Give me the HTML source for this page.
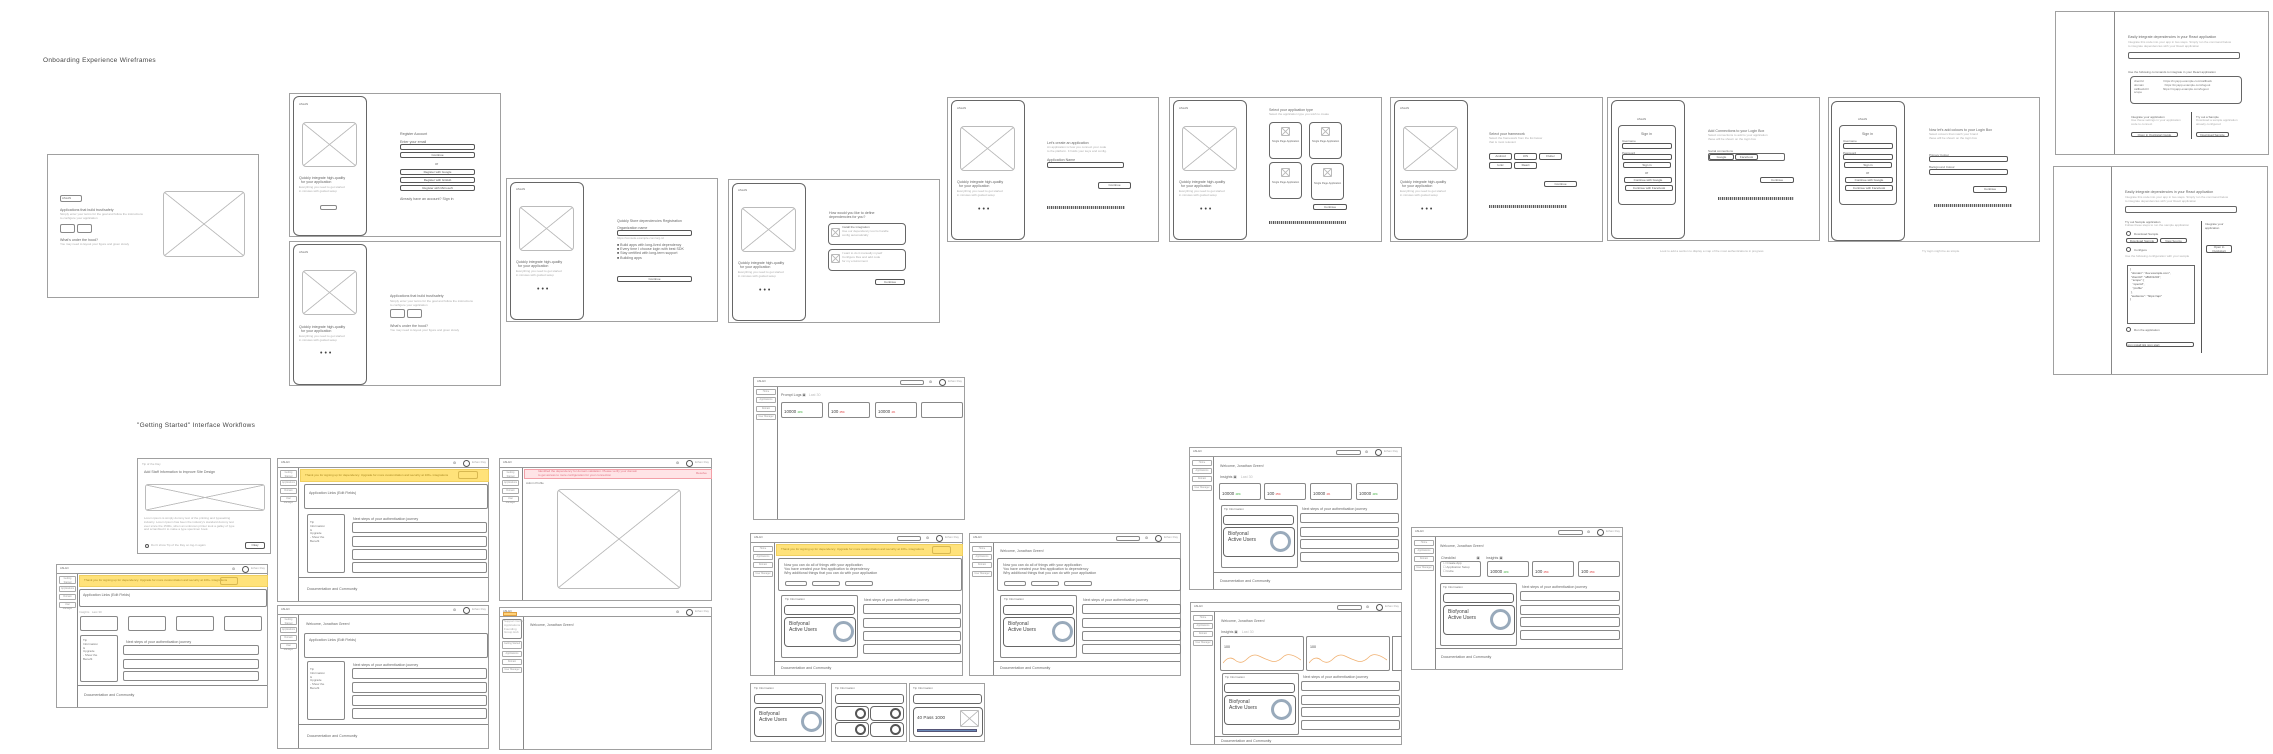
<!DOCTYPE html>
<html><head><meta charset="utf-8">
<style>
*{margin:0;padding:0;box-sizing:border-box}
body{width:2273px;height:754px;background:#fff;position:relative;overflow:hidden;font-family:"Liberation Sans",sans-serif}
.f{position:absolute;border:1px solid #a0a0a0;background:#fff}
.a{position:absolute}
.t{position:absolute;font-size:3.6px;line-height:4.2px;color:#666;white-space:nowrap}
.tg{position:absolute;font-size:3px;line-height:3.8px;color:#aaa;white-space:nowrap}
.h{position:absolute;font-size:4.4px;color:#444;white-space:nowrap}
.bx{position:absolute;border:1px solid #888;border-radius:2px;background:#fff}
.bd{position:absolute;border:1px solid #555;border-radius:2px;background:#fff;font-size:3px;color:#555;text-align:center;line-height:5px}
.card{position:absolute;border:1px solid #666;border-radius:6px;background:#fff}
.x{position:absolute;border:1px solid #bbb;border-radius:4px;background:
linear-gradient(to top right,transparent calc(50% - .6px),#bbb calc(50% - .3px),#bbb calc(50% + .3px),transparent calc(50% + .6px)),
linear-gradient(to bottom right,transparent calc(50% - .6px),#bbb calc(50% - .3px),#bbb calc(50% + .3px),transparent calc(50% + .6px))}
.dots{position:absolute;font-size:7px;color:#444;letter-spacing:2px}
.bar{position:absolute;height:3px;background:repeating-linear-gradient(90deg,#555 0 1px,#ccc 1px 2px,#777 2px 3px,#ddd 3px 4px)}
.tb{position:absolute;left:0;top:0;right:0;height:9px;border-bottom:1px solid #999}
.sb{position:absolute;left:0;top:9px;width:21px;bottom:0;border-right:1px solid #888}
.si{position:absolute;left:2px;width:17px;height:6px;border:1px solid #aaa;border-radius:1px;font-size:2.4px;color:#999;text-align:center;line-height:4px}
.yb{position:absolute;background:#ffe27a;border:1px solid #f0d060}
.circ{position:absolute;border:1px solid #555;border-radius:50%}
.title{position:absolute;font-size:6.5px;color:#444;letter-spacing:.3px;white-space:nowrap}
</style></head><body>

<div class="title" style="left:43px;top:57px">Onboarding Experience Wireframes</div>
<div class="title" style="left:137px;top:422px">"Getting Started" Interface Workflows</div>

<!-- Box1 -->
<div class="f" style="left:47px;top:154px;width:212px;height:144px">
 <div class="bx" style="left:12px;top:40px;width:22px;height:7px"></div><div class="t" style="left:14px;top:41px;font-size:2.8px">ASLAN</div>
 <div class="t" style="left:12px;top:53px">Applications that build trust/safety</div>
 <div class="tg" style="left:12px;top:58px">Simply enter your terms for the goal and follow the instructions<br>to configure your application</div>
 <div class="bx" style="left:12px;top:69px;width:15px;height:9px"></div><div class="bx" style="left:29px;top:69px;width:15px;height:9px"></div>
 <div class="t" style="left:12px;top:83px">What's under the hood?</div>
 <div class="tg" style="left:12px;top:88px">You may need to layout your figure and given slowly</div>
 <div class="x" style="left:115px;top:36px;width:82px;height:66px"></div>
</div>

<!-- phone frame generic -->
<div class="f" style="left:289px;top:93px;width:212px;height:144px">
 <div class="card" style="left:3px;top:2px;width:74px;height:140px"></div>
 <div class="t" style="left:9px;top:8px;font-size:2.8px">ASLAN</div>
 <div class="x" style="left:12px;top:28px;width:55px;height:45px"></div>
 <div class="t" style="left:9px;top:82px">Quickly integrate high-quality<br>&nbsp;&nbsp;for your application</div>
 <div class="tg" style="left:9px;top:92px">Everything you need to get started<br>in minutes with guided setup</div>
 <div class="bx" style="left:30px;top:111px;width:17px;height:5px"></div>
 <div class="t" style="left:110px;top:38px">Register Account</div>
 <div class="t" style="left:110px;top:46px">Enter your email</div>
 <div class="bd" style="left:110px;top:50px;width:75px;height:6px"></div>
 <div class="bd" style="left:110px;top:58px;width:75px;height:6px">Continue</div>
 <div class="t" style="left:145px;top:68px">or</div>
 <div class="bd" style="left:110px;top:75px;width:75px;height:6px">Register with Google</div>
 <div class="bd" style="left:110px;top:83px;width:75px;height:6px">Register with GitHub</div>
 <div class="bd" style="left:110px;top:91px;width:75px;height:6px">Register with Microsoft</div>
 <div class="t" style="left:110px;top:103px">Already have an account? Sign in</div>
</div>

<div class="f" style="left:289px;top:241px;width:212px;height:145px">
 <div class="card" style="left:3px;top:2px;width:74px;height:141px"></div>
 <div class="t" style="left:9px;top:8px;font-size:2.8px">ASLAN</div>
 <div class="x" style="left:12px;top:28px;width:55px;height:45px"></div>
 <div class="t" style="left:9px;top:83px">Quickly integrate high-quality<br>&nbsp;&nbsp;for your application</div>
 <div class="tg" style="left:9px;top:93px">Everything you need to get started<br>in minutes with guided setup</div>
 <div class="dots" style="left:30px;top:108px">•••</div>
 <div class="t" style="left:100px;top:52px">Applications that build trust/safety</div>
 <div class="tg" style="left:100px;top:58px">Simply enter your terms for the goal and follow the instructions<br>to configure your application</div>
 <div class="bx" style="left:100px;top:67px;width:15px;height:9px"></div><div class="bx" style="left:117px;top:67px;width:15px;height:9px"></div>
 <div class="t" style="left:100px;top:82px">What's under the hood?</div>
 <div class="tg" style="left:100px;top:87px">You may need to layout your figure and given slowly</div>
</div>

<div class="f" style="left:506px;top:178px;width:212px;height:144px">
 <div class="card" style="left:3px;top:3px;width:74px;height:138px"></div>
 <div class="t" style="left:9px;top:8px;font-size:2.8px">ASLAN</div>
 <div class="x" style="left:12px;top:27px;width:55px;height:45px"></div>
 <div class="t" style="left:9px;top:81px">Quickly integrate high-quality<br>&nbsp;&nbsp;for your application</div>
 <div class="tg" style="left:9px;top:91px">Everything you need to get started<br>in minutes with guided setup</div>
 <div class="dots" style="left:30px;top:107px">•••</div>
 <div class="t" style="left:110px;top:40px">Quickly Store dependencies Registration</div>
 <div class="t" style="left:110px;top:47px">Organization name</div>
 <div class="bd" style="left:110px;top:51px;width:75px;height:6px"></div>
 <div class="tg" style="left:110px;top:58px">https://console.example.com/org-id</div>
 <div class="t" style="left:110px;top:64px">■ Build apps with long-lived dependency<br>■ Every time I choose login with best SDK<br>■ Stay certified with long-term support<br>■ Building apps</div>
 <div class="bd" style="left:110px;top:97px;width:75px;height:6px">Continue</div>
</div>

<div class="f" style="left:728px;top:179px;width:212px;height:144px">
 <div class="card" style="left:3px;top:3px;width:74px;height:138px"></div>
 <div class="t" style="left:9px;top:8px;font-size:2.8px">ASLAN</div>
 <div class="x" style="left:12px;top:27px;width:55px;height:45px"></div>
 <div class="t" style="left:9px;top:81px">Quickly integrate high-quality<br>&nbsp;&nbsp;for your application</div>
 <div class="tg" style="left:9px;top:91px">Everything you need to get started<br>in minutes with guided setup</div>
 <div class="dots" style="left:30px;top:107px">•••</div>
 <div class="t" style="left:100px;top:31px">How would you like to define<br>dependencies for you?</div>
 <div class="card" style="left:99px;top:43px;width:78px;height:22px;border-radius:4px"></div>
 <div class="x" style="left:102px;top:48px;width:9px;height:9px;border-radius:1px"></div>
 <div class="t" style="left:113px;top:45px;font-size:3px">Install the integration</div>
 <div class="tg" style="left:113px;top:50px">Use our dependency tool to handle<br>config automatically</div>
 <div class="card" style="left:99px;top:69px;width:78px;height:22px;border-radius:4px"></div>
 <div class="x" style="left:102px;top:74px;width:9px;height:9px;border-radius:1px"></div>
 <div class="tg" style="left:113px;top:72px">I want to do it manually myself<br>Configure files and add code<br>for my environment</div>
 <div class="bd" style="left:146px;top:99px;width:30px;height:6px">Continue</div>
</div>

<!-- top row phone frames -->
<div class="f" style="left:947px;top:97px;width:212px;height:145px">
 <div class="card" style="left:3px;top:2px;width:74px;height:140px"></div>
 <div class="t" style="left:9px;top:8px;font-size:2.8px">ASLAN</div>
 <div class="x" style="left:12px;top:28px;width:55px;height:45px"></div>
 <div class="t" style="left:9px;top:82px">Quickly integrate high-quality<br>&nbsp;&nbsp;for your application</div>
 <div class="tg" style="left:9px;top:92px">Everything you need to get started<br>in minutes with guided setup</div>
 <div class="dots" style="left:30px;top:108px">•••</div>
 <div class="t" style="left:99px;top:43px">Let's create an application</div>
 <div class="tg" style="left:99px;top:48px">An application is how you connect your code<br>to the platform. It holds your keys and config.</div>
 <div class="t" style="left:99px;top:60px">Application Name</div>
 <div class="bd" style="left:99px;top:64px;width:77px;height:6px"></div>
 <div class="bd" style="left:150px;top:84px;width:33px;height:7px">Continue</div>
 <div class="bar" style="left:99px;top:108px;width:78px"></div>
</div>

<div class="f" style="left:1169px;top:97px;width:213px;height:145px">
 <div class="card" style="left:3px;top:2px;width:74px;height:140px"></div>
 <div class="t" style="left:9px;top:8px;font-size:2.8px">ASLAN</div>
 <div class="x" style="left:12px;top:28px;width:55px;height:45px"></div>
 <div class="t" style="left:9px;top:82px">Quickly integrate high-quality<br>&nbsp;&nbsp;for your application</div>
 <div class="tg" style="left:9px;top:92px">Everything you need to get started<br>in minutes with guided setup</div>
 <div class="dots" style="left:30px;top:108px">•••</div>
 <div class="t" style="left:99px;top:10px">Select your application type</div>
 <div class="tg" style="left:99px;top:15px">Select the application type you wish to create</div>
 <div class="card" style="left:99px;top:24px;width:33px;height:37px;border-radius:4px"></div>
 <div class="card" style="left:139px;top:24px;width:33px;height:37px;border-radius:4px"></div>
 <div class="card" style="left:99px;top:64px;width:33px;height:37px;border-radius:4px"></div>
 <div class="card" style="left:141px;top:65px;width:33px;height:37px;border-radius:4px"></div>
 <div class="x" style="left:111px;top:29px;width:9px;height:9px;border-radius:1px"></div>
 <div class="x" style="left:151px;top:29px;width:9px;height:9px;border-radius:1px"></div>
 <div class="x" style="left:111px;top:70px;width:9px;height:9px;border-radius:1px"></div>
 <div class="x" style="left:153px;top:70px;width:9px;height:9px;border-radius:1px"></div>
 <div class="t" style="left:102px;top:42px;font-size:2.6px">Single Page Application</div>
 <div class="t" style="left:142px;top:42px;font-size:2.6px">Single Page Application</div>
 <div class="t" style="left:102px;top:83px;font-size:2.6px">Single Page Application</div>
 <div class="t" style="left:144px;top:84px;font-size:2.6px">Single Page Application</div>
 <div class="bd" style="left:143px;top:106px;width:34px;height:6px">Continue</div>
 <div class="bar" style="left:99px;top:123px;width:77px"></div>
</div>

<div class="f" style="left:1390px;top:97px;width:213px;height:145px">
 <div class="card" style="left:3px;top:2px;width:74px;height:140px"></div>
 <div class="t" style="left:9px;top:8px;font-size:2.8px">ASLAN</div>
 <div class="x" style="left:12px;top:28px;width:55px;height:45px"></div>
 <div class="t" style="left:9px;top:82px">Quickly integrate high-quality<br>&nbsp;&nbsp;for your application</div>
 <div class="tg" style="left:9px;top:92px">Everything you need to get started<br>in minutes with guided setup</div>
 <div class="dots" style="left:30px;top:108px">•••</div>
 <div class="t" style="left:98px;top:34px">Select your framework</div>
 <div class="tg" style="left:98px;top:39px">Select the framework from the list below<br>that is most relevant</div>
 <div class="bd" style="left:98px;top:55px;width:23px;height:7px">Android</div>
 <div class="bd" style="left:123px;top:55px;width:23px;height:7px">iOS</div>
 <div class="bd" style="left:148px;top:55px;width:23px;height:7px">Flutter</div>
 <div class="bd" style="left:98px;top:64px;width:23px;height:7px">Ionic</div>
 <div class="bd" style="left:123px;top:64px;width:23px;height:7px">React</div>
 <div class="bd" style="left:153px;top:83px;width:33px;height:6px">Continue</div>
 <div class="bar" style="left:98px;top:107px;width:78px"></div>
</div>

<div class="f" style="left:1607px;top:97px;width:213px;height:144px">
 <div class="card" style="left:3px;top:2px;width:74px;height:139px"></div>
 <div class="t" style="left:29px;top:19px;font-size:2.8px">ASLAN</div>
 <div class="card" style="left:10px;top:27px;width:58px;height:80px;border-radius:4px"></div>
 <div class="t" style="left:33px;top:34px">Sign in</div>
 <div class="t" style="left:14px;top:41px;font-size:3px">Username</div>
 <div class="bd" style="left:14px;top:45px;width:50px;height:6px"></div>
 <div class="t" style="left:14px;top:53px;font-size:3px">Password</div>
 <div class="bd" style="left:14px;top:56px;width:50px;height:6px"></div>
 <div class="bd" style="left:15px;top:64px;width:48px;height:6px">Sign in</div>
 <div class="t" style="left:37px;top:73px">or</div>
 <div class="bd" style="left:16px;top:79px;width:48px;height:6px">Continue with Google</div>
 <div class="bd" style="left:17px;top:87px;width:48px;height:6px">Continue with Facebook</div>
 <div class="t" style="left:100px;top:31px">Add Connections to your Login Box</div>
 <div class="tg" style="left:100px;top:36px">Select connections to add to your application<br>these will be shown on the login box</div>
 <div class="t" style="left:100px;top:51px;font-size:3px">Social connections</div>
 <div class="card" style="left:100px;top:55px;width:77px;height:8px;border-radius:2px"></div>
 <div class="bd" style="left:101px;top:56px;width:25px;height:6px">Google</div>
 <div class="bd" style="left:127px;top:56px;width:23px;height:6px">Facebook</div>
 <div class="bd" style="left:152px;top:79px;width:34px;height:6px">Continue</div>
 <div class="bar" style="left:110px;top:99px;width:76px"></div>
</div>

<div class="f" style="left:1828px;top:97px;width:212px;height:145px">
 <div class="card" style="left:2px;top:3px;width:74px;height:140px"></div>
 <div class="t" style="left:29px;top:19px;font-size:2.8px">ASLAN</div>
 <div class="card" style="left:10px;top:27px;width:58px;height:80px;border-radius:4px"></div>
 <div class="t" style="left:33px;top:34px">Sign in</div>
 <div class="t" style="left:14px;top:41px;font-size:3px">Username</div>
 <div class="bd" style="left:14px;top:45px;width:50px;height:6px"></div>
 <div class="t" style="left:14px;top:53px;font-size:3px">Password</div>
 <div class="bd" style="left:14px;top:56px;width:50px;height:6px"></div>
 <div class="bd" style="left:15px;top:64px;width:48px;height:6px">Sign in</div>
 <div class="t" style="left:37px;top:73px">or</div>
 <div class="bd" style="left:16px;top:79px;width:48px;height:6px">Continue with Google</div>
 <div class="bd" style="left:16px;top:87px;width:48px;height:6px">Continue with Facebook</div>
 <div class="t" style="left:100px;top:30px">Now let's add colours to your Login Box</div>
 <div class="tg" style="left:100px;top:35px">Select colours that match your brand<br>these will be shown on the login box</div>
 <div class="t" style="left:100px;top:55px;font-size:3px">Primary Colour</div>
 <div class="bd" style="left:100px;top:58px;width:79px;height:6px"></div>
 <div class="t" style="left:100px;top:67px;font-size:3px">Background Colour</div>
 <div class="bd" style="left:100px;top:71px;width:79px;height:6px"></div>
 <div class="bd" style="left:144px;top:88px;width:34px;height:7px">Continue</div>
 <div class="bar" style="left:105px;top:106px;width:78px"></div>
</div>
<div class="tg" style="left:1660px;top:250px">Look to add a section to display a map of the most authentications in progress</div>
<div class="tg" style="left:1922px;top:250px">Try login might be as simple</div>

<!-- right top boxes -->
<div class="f" style="left:2055px;top:11px;width:214px;height:144px">
 <div class="a" style="left:58px;top:0;bottom:0;border-left:1px solid #888"></div>
 <div class="t" style="left:72px;top:23px">Easily integrate dependencies in your React application</div>
 <div class="tg" style="left:72px;top:29px">Integrate this code into your app in two steps. Simply run the command below<br>to integrate dependencies with your React application</div>
 <div class="card" style="left:72px;top:40px;width:112px;height:7px;border-radius:2px"></div>
 <div class="t" style="left:72px;top:58px;font-size:3px">Use the following commands to integrate in your React application</div>
 <div class="card" style="left:74px;top:64px;width:112px;height:28px;border-radius:4px"></div>
 <div class="tg" style="left:78px;top:68px;color:#777">clientId&nbsp;&nbsp;&nbsp;&nbsp;&nbsp;&nbsp;&nbsp;&nbsp;&nbsp;&nbsp;&nbsp;&nbsp;&nbsp;&nbsp;&nbsp;&nbsp;&nbsp;&nbsp;&nbsp;&nbsp;&nbsp;&nbsp;&nbsp;&nbsp;https://myapp.example.com/callback<br>domain&nbsp;&nbsp;&nbsp;&nbsp;&nbsp;&nbsp;&nbsp;&nbsp;&nbsp;&nbsp;&nbsp;&nbsp;&nbsp;&nbsp;&nbsp;&nbsp;&nbsp;&nbsp;&nbsp;&nbsp;&nbsp;&nbsp;&nbsp;&nbsp;&nbsp;https://myapp.example.com/logout<br>callbackUrl&nbsp;&nbsp;&nbsp;&nbsp;&nbsp;&nbsp;&nbsp;&nbsp;&nbsp;&nbsp;&nbsp;&nbsp;&nbsp;&nbsp;&nbsp;&nbsp;&nbsp;https://myapp.example.com/logout<br>scope</div>
 <div class="a" style="left:135px;top:100px;height:27px;border-left:1px solid #555"></div>
 <div class="t" style="left:75px;top:103px;font-size:3px">Integrate your application</div>
 <div class="tg" style="left:75px;top:107px">Use these settings in your application<br>code to connect</div>
 <div class="bd" style="left:75px;top:120px;width:47px;height:5px">Open in Quickstart Guide</div>
 <div class="t" style="left:140px;top:103px;font-size:3px">Try out a Sample</div>
 <div class="tg" style="left:140px;top:107px">Download a sample application<br>already configured</div>
 <div class="bd" style="left:140px;top:120px;width:33px;height:5px">Download Sample</div>
</div>

<div class="f" style="left:2053px;top:166px;width:215px;height:209px">
 <div class="a" style="left:57px;top:0;bottom:0;border-left:1px solid #888"></div>
 <div class="t" style="left:71px;top:23px">Easily integrate dependencies in your React application</div>
 <div class="tg" style="left:71px;top:29px">Integrate this code into your app in two steps. Simply run the command below<br>to integrate dependencies with your React application</div>
 <div class="card" style="left:71px;top:39px;width:112px;height:7px;border-radius:2px"></div>
 <div class="t" style="left:71px;top:53px;font-size:3px">Try out Sample application</div>
 <div class="tg" style="left:71px;top:57px">Follow these steps to run the sample application</div>
 <div class="circ" style="left:72px;top:64px;width:5px;height:5px"></div><div class="t" style="left:80px;top:65px;font-size:3px">Download Sample</div>
 <div class="bd" style="left:72px;top:71px;width:32px;height:5px">Download Sample</div>
 <div class="bd" style="left:106px;top:71px;width:27px;height:5px">View Source</div>
 <div class="circ" style="left:72px;top:80px;width:5px;height:5px"></div><div class="t" style="left:80px;top:81px;font-size:3px">Configure</div>
 <div class="tg" style="left:71px;top:88px">Use the following configuration with your sample</div>
 <div class="a" style="left:73px;top:98px;width:68px;height:59px;border:1px solid #666"></div>
 <div class="tg" style="left:76px;top:101px;color:#555">{<br>&nbsp;"domain": "dev.example.com",<br>&nbsp;"clientId": "aBcD1234",<br>&nbsp;&nbsp;"scope": [<br>&nbsp;&nbsp;&nbsp;"openid",<br>&nbsp;&nbsp;&nbsp;"profile"<br>&nbsp;],<br>&nbsp;"audience": "https://api"<br>}</div>
 <div class="circ" style="left:72px;top:160px;width:5px;height:5px"></div><div class="t" style="left:80px;top:161px;font-size:3px">Run the application</div>
 <div class="bd" style="left:72px;top:175px;width:68px;height:5px;text-align:left">npm install &amp;&amp; npm start</div>
 <div class="a" style="left:147px;top:54px;height:132px;border-left:1px solid #555"></div>
 <div class="t" style="left:151px;top:55px;font-size:3px">Integrate your<br>application</div>
 <div class="bd" style="left:152px;top:78px;width:26px;height:8px;line-height:3.5px">Open in Quickstart</div>
</div>

<!-- Getting started section -->
<div class="f" style="left:137px;top:458px;width:134px;height:96px">
 <div class="tg" style="left:4px;top:4px">Tip of the Day</div>
 <div class="t" style="left:6px;top:11px">Add Staff Information to Improve Site Design</div>
 <div class="x" style="left:7px;top:25px;width:120px;height:27px;border-radius:3px"></div>
 <div class="tg" style="left:6px;top:58px">Lorem ipsum is simply dummy text of the printing and typesetting<br>industry. Lorem Ipsum has been the industry's standard dummy text<br>ever since the 1500s, when an unknown printer took a galley of type<br>and scrambled it to make a type specimen book.</div>
 <div class="circ" style="left:7px;top:85px;width:4px;height:4px"></div><div class="tg" style="left:13px;top:85px">Don't show Tip of the Day on log-in again</div>
 <div class="bd" style="left:107px;top:83px;width:20px;height:7px">Okay</div>
</div>

<!-- Dashboard L -->
<div class="f" style="left:56px;top:564px;width:212px;height:144px">
 <div class="tb"></div><div class="t" style="left:3px;top:2px;font-size:2.6px">ASLAN</div>
 <div class="t" style="left:175px;top:2px">⚙</div><div class="circ" style="left:185px;top:1px;width:7px;height:7px"></div><div class="tg" style="left:194px;top:2px">Ethan Ray</div>
 <div class="sb"></div>
 <div class="si" style="top:11px;height:8px">Getting Started</div><div class="si" style="top:21px">Applications</div><div class="si" style="top:29px">Domain</div><div class="si" style="top:37px">User Manager</div>
 <div class="yb" style="left:22px;top:10px;width:189px;height:12px"></div>
 <div class="tg" style="left:27px;top:14px;color:#aa8a20">Thank you for signing up for dependency. Upgrade for more customization and security at 10K+ integrations</div>
 <div class="bx" style="left:163px;top:12px;width:18px;height:8px;background:transparent;border-color:#d8b850"></div>
 <div class="bx" style="left:22px;top:24px;width:188px;height:18px"></div><div class="t" style="left:26px;top:28px">Application Links (Edit Fields)</div>
 <div class="tg" style="left:22px;top:46px">Insights&nbsp;&nbsp;&nbsp;Last 30</div>
 <div class="bx" style="left:23px;top:51px;width:38px;height:15px"></div><div class="bx" style="left:71px;top:51px;width:38px;height:15px"></div>
 <div class="bx" style="left:119px;top:51px;width:38px;height:15px"></div><div class="bx" style="left:167px;top:51px;width:38px;height:15px"></div>
 <div class="bx" style="left:23px;top:70px;width:38px;height:47px"></div>
 <div class="tg" style="left:26px;top:74px;color:#777">Tip<br>Information<br>&amp;<br>Upgrade<br>- Show the<br>Benefit</div>
 <div class="t" style="left:69px;top:75px">Next steps of your authentication journey</div>
 <div class="bx" style="left:66px;top:80px;width:136px;height:10px"></div>
 <div class="bx" style="left:66px;top:94px;width:136px;height:10px"></div>
 <div class="bx" style="left:66px;top:106px;width:136px;height:10px"></div>
 <div class="a" style="left:21px;top:120px;right:0;border-top:1px solid #888"></div>
 <div class="t" style="left:27px;top:128px">Documentation and Community</div>
</div>

<!-- Dashboard B -->
<div class="f" style="left:277px;top:458px;width:212px;height:144px">
 <div class="tb"></div><div class="t" style="left:3px;top:2px;font-size:2.6px">ASLAN</div>
 <div class="t" style="left:175px;top:2px">⚙</div><div class="circ" style="left:185px;top:1px;width:7px;height:7px"></div><div class="tg" style="left:194px;top:2px">Ethan Ray</div>
 <div class="sb"></div>
 <div class="si" style="top:11px;height:8px">Getting Started</div><div class="si" style="top:21px">Applications</div><div class="si" style="top:29px">Domain</div><div class="si" style="top:37px">User Manager</div>
 <div class="yb" style="left:22px;top:10px;width:189px;height:13px"></div>
 <div class="tg" style="left:27px;top:15px;color:#aa8a20">Thank you for signing up for dependency. Upgrade for more customization and security at 10K+ integrations</div>
 <div class="bx" style="left:180px;top:12px;width:20px;height:8px;background:transparent;border-color:#d8b850"></div>
 <div class="bx" style="left:26px;top:25px;width:184px;height:25px"></div><div class="t" style="left:31px;top:32px">Application Links (Edit Fields)</div>
 <div class="bx" style="left:29px;top:55px;width:38px;height:59px"></div>
 <div class="tg" style="left:32px;top:62px;color:#777">Tip<br>Information<br>&amp;<br>Upgrade<br>- Show the<br>Benefit</div>
 <div class="t" style="left:75px;top:58px">Next steps of your authentication journey</div>
 <div class="bx" style="left:74px;top:63px;width:135px;height:11px"></div>
 <div class="bx" style="left:74px;top:77px;width:135px;height:11px"></div>
 <div class="bx" style="left:74px;top:90px;width:135px;height:11px"></div>
 <div class="bx" style="left:74px;top:103px;width:135px;height:11px"></div>
 <div class="a" style="left:21px;top:118px;right:0;border-top:1px solid #888"></div>
 <div class="t" style="left:29px;top:128px">Documentation and Community</div>
</div>

<!-- Dashboard B2 -->
<div class="f" style="left:277px;top:605px;width:212px;height:144px">
 <div class="tb"></div><div class="t" style="left:3px;top:2px;font-size:2.6px">ASLAN</div>
 <div class="t" style="left:175px;top:2px">⚙</div><div class="circ" style="left:185px;top:1px;width:7px;height:7px"></div><div class="tg" style="left:194px;top:2px">Ethan Ray</div>
 <div class="sb"></div>
 <div class="si" style="top:11px;height:8px">Getting Started</div><div class="si" style="top:21px">Applications</div><div class="si" style="top:29px">Domain</div><div class="si" style="top:37px">User Manager</div>
 <div class="t" style="left:28px;top:16px">Welcome, Jonathan Green!</div>
 <div class="bx" style="left:26px;top:27px;width:184px;height:25px"></div><div class="t" style="left:31px;top:32px">Application Links (Edit Fields)</div>
 <div class="bx" style="left:29px;top:55px;width:38px;height:59px"></div>
 <div class="tg" style="left:32px;top:62px;color:#777">Tip<br>Information<br>&amp;<br>Upgrade<br>- Show the<br>Benefit</div>
 <div class="t" style="left:75px;top:57px">Next steps of your authentication journey</div>
 <div class="bx" style="left:74px;top:62px;width:135px;height:11px"></div>
 <div class="bx" style="left:74px;top:76px;width:135px;height:11px"></div>
 <div class="bx" style="left:74px;top:89px;width:135px;height:11px"></div>
 <div class="bx" style="left:74px;top:102px;width:135px;height:11px"></div>
 <div class="a" style="left:21px;top:118px;right:0;border-top:1px solid #888"></div>
 <div class="t" style="left:29px;top:128px">Documentation and Community</div>
</div>

<!-- Dashboard D (red) -->
<div class="f" style="left:499px;top:458px;width:213px;height:143px">
 <div class="tb"></div><div class="t" style="left:3px;top:2px;font-size:2.6px">ASLAN</div>
 <div class="t" style="left:176px;top:2px">⚙</div><div class="circ" style="left:186px;top:1px;width:7px;height:7px"></div><div class="tg" style="left:195px;top:2px">Ethan Ray</div>
 <div class="sb" style="width:23px"></div>
 <div class="si" style="top:11px;height:8px">Getting Started</div><div class="si" style="top:21px">Applications</div><div class="si" style="top:29px">Domain</div><div class="si" style="top:37px">User Manager</div>
 <div class="a" style="left:24px;top:10px;width:188px;height:10px;background:#ffe4e6;border:1px solid #f3a0a8"></div>
 <div class="tg" style="left:38px;top:11px;color:#e07080">Identified the dependency for domain validation. Please verify your domain<br>to get access to more configuration for your connection</div>
 <div class="tg" style="left:196px;top:13px;color:#e07080">Resolve</div>
 <div class="tg" style="left:26px;top:23px;color:#777">Admin Profile</div>
 <div class="x" style="left:57px;top:30px;width:124px;height:100px"></div>
</div>

<!-- Dashboard D2 -->
<div class="f" style="left:499px;top:607px;width:213px;height:143px">
 <div class="tb"></div><div class="t" style="left:3px;top:2px;font-size:2.6px">ASLAN</div>
 <div class="a" style="left:3px;top:4px;width:14px;height:4px;background:#ffd27a;border:1px solid #e0a040"></div>
 <div class="t" style="left:176px;top:2px">⚙</div><div class="circ" style="left:186px;top:1px;width:7px;height:7px"></div><div class="tg" style="left:195px;top:2px">Ethan Ray</div>
 <div class="sb" style="width:24px"></div>
 <div class="bx" style="left:2px;top:11px;width:20px;height:20px"></div>
 <div class="tg" style="left:4px;top:12px">Support Center<br>Applications<br>Founding<br>Group Hub</div>
 <div class="si" style="top:33px;width:20px;height:8px">Getting Started</div><div class="si" style="top:43px;width:20px">Applications</div><div class="si" style="top:51px;width:20px">Domain</div><div class="si" style="top:59px;width:20px">User Manager</div>
 <div class="t" style="left:30px;top:15px">Welcome, Jonathan Green!</div>
</div>

<!-- Dashboard C (stats) -->
<div class="f" style="left:753px;top:377px;width:212px;height:143px">
 <div class="tb"></div><div class="t" style="left:3px;top:2px;font-size:2.6px">ASLAN</div>
 <div class="bx" style="left:146px;top:2px;width:24px;height:5px"></div>
 <div class="t" style="left:175px;top:2px">⚙</div><div class="circ" style="left:185px;top:1px;width:7px;height:7px"></div><div class="tg" style="left:194px;top:2px">Ethan Ray</div>
 <div class="sb" style="width:24px"></div>
 <div class="si" style="top:11px;width:20px">Home</div><div class="si" style="top:19px;width:20px">Applications</div><div class="si" style="top:28px;width:20px">Domain</div><div class="si" style="top:36px;width:20px">User Manager</div>
 <div class="t" style="left:27px;top:15px">Prompt Logs ▣&nbsp;&nbsp;&nbsp;<span style="color:#bbb">Last 30</span></div>
 <div class="bx" style="left:27px;top:24px;width:42px;height:16px"></div><div class="h" style="left:30px;top:31px">10000 <span style="font-size:2.6px;color:#3a3">40%</span></div>
 <div class="bx" style="left:74px;top:24px;width:42px;height:16px"></div><div class="h" style="left:77px;top:31px">100 <span style="font-size:2.6px;color:#d33">45%</span></div>
 <div class="bx" style="left:121px;top:24px;width:42px;height:16px"></div><div class="h" style="left:124px;top:31px">10000 <span style="font-size:2.6px;color:#d33">4%</span></div>
 <div class="bx" style="left:167px;top:24px;width:42px;height:16px"></div>
</div>

<!-- Dashboard E type template -->
<div class="f" style="left:750px;top:533px;width:213px;height:143px">
 <div class="tb"></div><div class="t" style="left:3px;top:2px;font-size:2.6px">ASLAN</div>
 <div class="bx" style="left:146px;top:2px;width:24px;height:5px"></div>
 <div class="t" style="left:175px;top:2px">⚙</div><div class="circ" style="left:185px;top:1px;width:7px;height:7px"></div><div class="tg" style="left:194px;top:2px">Ethan Ray</div>
 <div class="sb" style="width:24px"></div>
 <div class="si" style="top:12px;width:20px">Home</div><div class="si" style="top:20px;width:20px">Applications</div><div class="si" style="top:28px;width:20px">Domain</div><div class="si" style="top:37px;width:20px">User Manager</div>
 <div class="yb" style="left:25px;top:10px;width:187px;height:12px"></div>
 <div class="tg" style="left:30px;top:14px;color:#aa8a20">Thank you for signing up for dependency. Upgrade for more customization and security at 10K+ integrations</div>
 <div class="bx" style="left:181px;top:12px;width:19px;height:8px;background:transparent;border-color:#d8b850"></div>
 <div class="bx" style="left:27px;top:24px;width:184px;height:33px"></div>
 <div class="t" style="left:33px;top:29px">Now you can do all of things with your application<br>You have created your first application to dependency<br>Why additional things that you can do with your application</div>
 <div class="bx" style="left:34px;top:47px;width:22px;height:5px"></div><div class="bx" style="left:61px;top:47px;width:28px;height:5px"></div><div class="bx" style="left:94px;top:47px;width:28px;height:5px"></div>
 <div class="bx" style="left:30px;top:61px;width:77px;height:63px"></div>
 <div class="tg" style="left:34px;top:64px;color:#777">Tip Information</div>
 <div class="card" style="left:33px;top:71px;width:71px;height:10px;border-radius:3px"></div>
 <div class="card" style="left:33px;top:83px;width:72px;height:30px;border-radius:4px"></div>
 <div class="h" style="left:38px;top:87px;font-size:5px;line-height:6px">Biofyonal<br>Active Users</div>
 <div class="circ" style="left:82px;top:87px;width:21px;height:21px;border:3px solid #9ab"></div>
 <div class="t" style="left:113px;top:64px">Next steps of your authentication journey</div>
 <div class="bx" style="left:112px;top:70px;width:98px;height:10px"></div>
 <div class="bx" style="left:112px;top:84px;width:98px;height:10px"></div>
 <div class="bx" style="left:112px;top:97px;width:98px;height:10px"></div>
 <div class="bx" style="left:112px;top:110px;width:98px;height:10px"></div>
 <div class="a" style="left:24px;top:127px;right:0;border-top:1px solid #888"></div>
 <div class="t" style="left:30px;top:132px">Documentation and Community</div>
</div>

<div class="f" style="left:969px;top:533px;width:212px;height:143px">
 <div class="tb"></div><div class="t" style="left:3px;top:2px;font-size:2.6px">ASLAN</div>
 <div class="bx" style="left:146px;top:2px;width:24px;height:5px"></div>
 <div class="t" style="left:175px;top:2px">⚙</div><div class="circ" style="left:185px;top:1px;width:7px;height:7px"></div><div class="tg" style="left:194px;top:2px">Ethan Ray</div>
 <div class="sb" style="width:24px"></div>
 <div class="si" style="top:12px;width:20px">Home</div><div class="si" style="top:20px;width:20px">Applications</div><div class="si" style="top:28px;width:20px">Domain</div><div class="si" style="top:37px;width:20px">User Manager</div>
 <div class="t" style="left:30px;top:15px">Welcome, Jonathan Green!</div>
 <div class="bx" style="left:27px;top:24px;width:184px;height:33px"></div>
 <div class="t" style="left:33px;top:29px">Now you can do all of things with your application<br>You have created your first application to dependency<br>Why additional things that you can do with your application</div>
 <div class="bx" style="left:34px;top:47px;width:22px;height:5px"></div><div class="bx" style="left:61px;top:47px;width:28px;height:5px"></div><div class="bx" style="left:94px;top:47px;width:28px;height:5px"></div>
 <div class="bx" style="left:30px;top:61px;width:77px;height:63px"></div>
 <div class="tg" style="left:34px;top:64px;color:#777">Tip Information</div>
 <div class="card" style="left:33px;top:71px;width:71px;height:10px;border-radius:3px"></div>
 <div class="card" style="left:33px;top:83px;width:72px;height:30px;border-radius:4px"></div>
 <div class="h" style="left:38px;top:87px;font-size:5px;line-height:6px">Biofyonal<br>Active Users</div>
 <div class="circ" style="left:82px;top:87px;width:21px;height:21px;border:3px solid #9ab"></div>
 <div class="t" style="left:113px;top:64px">Next steps of your authentication journey</div>
 <div class="bx" style="left:112px;top:70px;width:99px;height:10px"></div>
 <div class="bx" style="left:112px;top:84px;width:99px;height:10px"></div>
 <div class="bx" style="left:112px;top:97px;width:99px;height:10px"></div>
 <div class="bx" style="left:112px;top:110px;width:99px;height:10px"></div>
 <div class="a" style="left:24px;top:127px;right:0;border-top:1px solid #888"></div>
 <div class="t" style="left:30px;top:132px">Documentation and Community</div>
</div>

<!-- small tip cards -->
<div class="f" style="left:750px;top:683px;width:76px;height:59px">
 <div class="tg" style="left:3px;top:3px;color:#777">Tip Information</div>
 <div class="card" style="left:3px;top:10px;width:69px;height:10px;border-radius:3px"></div>
 <div class="card" style="left:3px;top:23px;width:70px;height:30px;border-radius:4px"></div>
 <div class="h" style="left:8px;top:27px;font-size:5px;line-height:6px">Biofyonal<br>Active Users</div>
 <div class="circ" style="left:50px;top:27px;width:21px;height:21px;border:3px solid #9ab"></div>
</div>
<div class="f" style="left:831px;top:683px;width:76px;height:59px">
 <div class="tg" style="left:3px;top:3px;color:#777">Tip Information</div>
 <div class="card" style="left:3px;top:10px;width:69px;height:10px;border-radius:3px"></div>
 <div class="card" style="left:3px;top:22px;width:34px;height:15px;border-radius:4px"></div>
 <div class="card" style="left:38px;top:22px;width:34px;height:15px;border-radius:4px"></div>
 <div class="card" style="left:3px;top:38px;width:34px;height:15px;border-radius:4px"></div>
 <div class="card" style="left:38px;top:38px;width:34px;height:15px;border-radius:4px"></div>
 <div class="circ" style="left:23px;top:24px;width:11px;height:11px;border-width:2px"></div>
 <div class="circ" style="left:58px;top:24px;width:11px;height:11px;border-width:2px"></div>
 <div class="circ" style="left:23px;top:40px;width:11px;height:11px;border-width:2px"></div>
 <div class="circ" style="left:58px;top:40px;width:11px;height:11px;border-width:2px"></div>
</div>
<div class="f" style="left:909px;top:683px;width:76px;height:59px">
 <div class="tg" style="left:3px;top:3px;color:#777">Tip Information</div>
 <div class="card" style="left:3px;top:10px;width:69px;height:10px;border-radius:3px"></div>
 <div class="card" style="left:3px;top:23px;width:70px;height:30px;border-radius:4px"></div>
 <div class="h" style="left:7px;top:31px;font-size:4.6px">40 Pass 1000</div>
 <div class="x" style="left:50px;top:26px;width:19px;height:17px;border-radius:1px"></div>
 <div class="a" style="left:7px;top:45px;width:60px;height:3px;background:#6a8ab8;border:1px solid #557"></div>
</div>

<!-- right dashboards -->
<div class="f" style="left:1189px;top:447px;width:213px;height:143px">
 <div class="tb"></div><div class="t" style="left:3px;top:2px;font-size:2.6px">ASLAN</div>
 <div class="bx" style="left:146px;top:2px;width:25px;height:5px"></div>
 <div class="t" style="left:175px;top:2px">⚙</div><div class="circ" style="left:185px;top:1px;width:7px;height:7px"></div><div class="tg" style="left:194px;top:2px">Ethan Ray</div>
 <div class="sb" style="width:24px"></div>
 <div class="si" style="top:12px;width:20px">Home</div><div class="si" style="top:20px;width:20px">Applications</div><div class="si" style="top:28px;width:20px">Domain</div><div class="si" style="top:37px;width:20px">User Manager</div>
 <div class="t" style="left:30px;top:16px">Welcome, Jonathan Green!</div>
 <div class="t" style="left:30px;top:27px">Insights ▣&nbsp;&nbsp;&nbsp;&nbsp;<span style="color:#bbb">Last 30</span></div>
 <div class="bx" style="left:29px;top:35px;width:42px;height:17px"></div><div class="h" style="left:32px;top:43px">10000 <span style="font-size:2.6px;color:#3a3">40%</span></div>
 <div class="bx" style="left:74px;top:35px;width:42px;height:17px"></div><div class="h" style="left:77px;top:43px">100 <span style="font-size:2.6px;color:#d33">45%</span></div>
 <div class="bx" style="left:120px;top:35px;width:42px;height:17px"></div><div class="h" style="left:123px;top:43px">10000 <span style="font-size:2.6px;color:#d33">4%</span></div>
 <div class="bx" style="left:166px;top:35px;width:42px;height:17px"></div><div class="h" style="left:169px;top:43px">10000 <span style="font-size:2.6px;color:#3a3">40%</span></div>
 <div class="bx" style="left:31px;top:57px;width:77px;height:63px"></div>
 <div class="tg" style="left:34px;top:60px;color:#777">Tip Information</div>
 <div class="card" style="left:33px;top:67px;width:71px;height:10px;border-radius:3px"></div>
 <div class="card" style="left:33px;top:79px;width:72px;height:30px;border-radius:4px"></div>
 <div class="h" style="left:38px;top:83px;font-size:5px;line-height:6px">Biofyonal<br>Active Users</div>
 <div class="circ" style="left:80px;top:83px;width:21px;height:21px;border:3px solid #9ab"></div>
 <div class="t" style="left:112px;top:59px">Next steps of your authentication journey</div>
 <div class="bx" style="left:110px;top:65px;width:99px;height:10px"></div>
 <div class="bx" style="left:110px;top:79px;width:99px;height:10px"></div>
 <div class="bx" style="left:110px;top:91px;width:99px;height:10px"></div>
 <div class="bx" style="left:110px;top:104px;width:99px;height:10px"></div>
 <div class="a" style="left:24px;top:124px;right:0;border-top:1px solid #888"></div>
 <div class="t" style="left:30px;top:131px">Documentation and Community</div>
</div>

<div class="f" style="left:1190px;top:602px;width:212px;height:143px">
 <div class="tb"></div><div class="t" style="left:3px;top:2px;font-size:2.6px">ASLAN</div>
 <div class="bx" style="left:146px;top:2px;width:25px;height:5px"></div>
 <div class="t" style="left:175px;top:2px">⚙</div><div class="circ" style="left:185px;top:1px;width:7px;height:7px"></div><div class="tg" style="left:194px;top:2px">Ethan Ray</div>
 <div class="sb" style="width:24px"></div>
 <div class="si" style="top:12px;width:20px">Home</div><div class="si" style="top:20px;width:20px">Applications</div><div class="si" style="top:28px;width:20px">Domain</div><div class="si" style="top:37px;width:20px">User Manager</div>
 <div class="t" style="left:30px;top:16px">Welcome, Jonathan Green!</div>
 <div class="t" style="left:30px;top:27px">Insights ▣&nbsp;&nbsp;&nbsp;&nbsp;<span style="color:#bbb">Last 30</span></div>
 <div class="bx" style="left:29px;top:33px;width:84px;height:35px"></div>
 <div class="bx" style="left:115px;top:33px;width:84px;height:35px"></div>
 <div class="a" style="left:201px;top:33px;width:10px;height:35px;border:1px solid #888;border-right:none"></div>
 <svg class="a" style="left:32px;top:48px" width="78" height="16"><path d="M0 12 Q6 4 12 9 T24 8 T36 5 T48 10 T60 6 T78 9" fill="none" stroke="#f0b070" stroke-width=".8"/></svg>
 <svg class="a" style="left:118px;top:48px" width="78" height="16"><path d="M0 12 Q6 4 12 9 T24 8 T36 5 T48 10 T60 6 T78 9" fill="none" stroke="#f0b070" stroke-width=".8"/></svg>
 <div class="h" style="left:33px;top:42px;font-size:3.6px">100</div><div class="h" style="left:119px;top:42px;font-size:3.6px">100</div>
 <div class="bx" style="left:31px;top:70px;width:77px;height:62px"></div>
 <div class="tg" style="left:34px;top:73px;color:#777">Tip Information</div>
 <div class="card" style="left:33px;top:80px;width:71px;height:10px;border-radius:3px"></div>
 <div class="card" style="left:33px;top:92px;width:72px;height:30px;border-radius:4px"></div>
 <div class="h" style="left:38px;top:96px;font-size:5px;line-height:6px">Biofyonal<br>Active Users</div>
 <div class="circ" style="left:80px;top:96px;width:21px;height:21px;border:3px solid #9ab"></div>
 <div class="t" style="left:112px;top:72px">Next steps of your authentication journey</div>
 <div class="bx" style="left:110px;top:78px;width:99px;height:10px"></div>
 <div class="bx" style="left:110px;top:92px;width:99px;height:10px"></div>
 <div class="bx" style="left:110px;top:104px;width:99px;height:10px"></div>
 <div class="bx" style="left:110px;top:117px;width:99px;height:10px"></div>
 <div class="a" style="left:24px;top:133px;right:0;border-top:1px solid #888"></div>
 <div class="t" style="left:30px;top:136px">Documentation and Community</div>
</div>

<div class="f" style="left:1411px;top:527px;width:212px;height:143px">
 <div class="tb"></div><div class="t" style="left:3px;top:2px;font-size:2.6px">ASLAN</div>
 <div class="bx" style="left:146px;top:2px;width:25px;height:5px"></div>
 <div class="t" style="left:175px;top:2px">⚙</div><div class="circ" style="left:185px;top:1px;width:7px;height:7px"></div><div class="tg" style="left:194px;top:2px">Ethan Ray</div>
 <div class="sb" style="width:24px"></div>
 <div class="si" style="top:12px;width:20px">Home</div><div class="si" style="top:20px;width:20px">Applications</div><div class="si" style="top:28px;width:20px">Domain</div><div class="si" style="top:37px;width:20px">User Manager</div>
 <div class="t" style="left:28px;top:16px">Welcome, Jonathan Green!</div>
 <div class="t" style="left:29px;top:28px">Checklist&nbsp;&nbsp;&nbsp;&nbsp;&nbsp;&nbsp;&nbsp;&nbsp;&nbsp;&nbsp;&nbsp;&nbsp;&nbsp;&nbsp;&nbsp;&nbsp;&nbsp;&nbsp;&nbsp;&nbsp;&nbsp;▣&nbsp;&nbsp;&nbsp;&nbsp;&nbsp;&nbsp;Insights ▣</div>
 <div class="bx" style="left:28px;top:33px;width:41px;height:16px"></div>
 <div class="tg" style="left:31px;top:34px;color:#777">☐ Create App<br>☐ Application Setup<br>☐ Invite</div>
 <div class="bx" style="left:75px;top:33px;width:42px;height:16px"></div><div class="h" style="left:78px;top:41px">10000 <span style="font-size:2.6px;color:#3a3">40%</span></div>
 <div class="bx" style="left:120px;top:33px;width:42px;height:16px"></div><div class="h" style="left:123px;top:41px">100 <span style="font-size:2.6px;color:#d33">45%</span></div>
 <div class="bx" style="left:166px;top:33px;width:42px;height:16px"></div><div class="h" style="left:169px;top:41px">100 <span style="font-size:2.6px;color:#d33">45%</span></div>
 <div class="bx" style="left:28px;top:55px;width:77px;height:63px"></div>
 <div class="tg" style="left:31px;top:58px;color:#777">Tip Information</div>
 <div class="card" style="left:31px;top:65px;width:71px;height:10px;border-radius:3px"></div>
 <div class="card" style="left:31px;top:77px;width:72px;height:30px;border-radius:4px"></div>
 <div class="h" style="left:36px;top:81px;font-size:5px;line-height:6px">Biofyonal<br>Active Users</div>
 <div class="circ" style="left:78px;top:81px;width:21px;height:21px;border:3px solid #9ab"></div>
 <div class="t" style="left:110px;top:57px">Next steps of your authentication journey</div>
 <div class="bx" style="left:108px;top:63px;width:100px;height:10px"></div>
 <div class="bx" style="left:108px;top:77px;width:100px;height:10px"></div>
 <div class="bx" style="left:108px;top:89px;width:100px;height:10px"></div>
 <div class="bx" style="left:108px;top:102px;width:100px;height:10px"></div>
 <div class="a" style="left:24px;top:120px;right:0;border-top:1px solid #888"></div>
 <div class="t" style="left:29px;top:127px">Documentation and Community</div>
</div>

</body></html>
